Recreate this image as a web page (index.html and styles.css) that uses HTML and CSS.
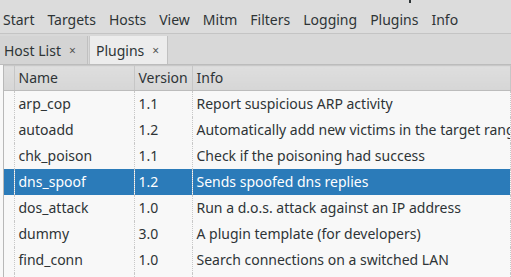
FILE: index.html
```html
<!DOCTYPE html>
<html lang="en">
<head>
  <meta charset="UTF-8" />
  <title>Ettercap – Plugins</title>
  <link rel="stylesheet" href="styles.css">
</head>
<body>

  <div class="titlebar-bit"></div>

  <nav class="menubar">
    <span>Start</span>
    <span>Targets</span>
    <span>Hosts</span>
    <span>View</span>
    <span>Mitm</span>
    <span>Filters</span>
    <span>Logging</span>
    <span>Plugins</span>
    <span>Info</span>
  </nav>

  <div class="tabbar">
    <div class="tab">Host List <span class="close">×</span></div>
    <div class="tab active">Plugins <span class="close">×</span></div>
  </div>

  <div class="view">
    <table class="plugins">
      <colgroup>
        <col class="col-mark">
        <col class="col-name">
        <col class="col-ver">
        <col>
      </colgroup>
      <thead>
        <tr>
          <th></th>
          <th>Name</th>
          <th>Version</th>
          <th>Info</th>
        </tr>
      </thead>
      <tbody>
        <tr><td></td><td>arp_cop</td><td>1.1</td><td>Report suspicious ARP activity</td></tr>
        <tr><td></td><td>autoadd</td><td>1.2</td><td>Automatically add new victims in the target range</td></tr>
        <tr><td></td><td>chk_poison</td><td>1.1</td><td>Check if the poisoning had success</td></tr>
        <tr class="selected"><td></td><td>dns_spoof</td><td>1.2</td><td>Sends spoofed dns replies</td></tr>
        <tr><td></td><td>dos_attack</td><td>1.0</td><td>Run a d.o.s. attack against an IP address</td></tr>
        <tr><td></td><td>dummy</td><td>3.0</td><td>A plugin template (for developers)</td></tr>
        <tr><td></td><td>find_conn</td><td>1.0</td><td>Search connections on a switched LAN</td></tr>
        <tr><td></td><td></td><td></td><td></td></tr>
      </tbody>
    </table>
  </div>

</body>
</html>
```

FILE: styles.css
```css
body {
  margin: 0;
  width: 511px;
  height: 277px;
  overflow: hidden;
  font-family: 'Noto Sans', sans-serif;
  font-size: 14px;
  color: #2e3436;
  background-color: #f8f8f8;
  position: relative;
}

.titlebar-bit {
  position: absolute;
  left: 409px;
  top: 0;
  width: 2px;
  height: 3px;
  background-color: #2e3436;
}

.menubar {
  display: flex;
  gap: 13px;
  height: 34px;
  padding: 0 0 0 3px;
  align-items: center;
  padding-top: 7px;
  box-sizing: border-box;
  background-color: #dcdcdc;
  border-bottom: 1px solid #c4c4c4;
  line-height: 20px;
}

.tabbar {
  display: flex;
  height: 31px;
  background-color: #d8d8d8;
  border-bottom: 1px solid #bcbcbc;
  box-sizing: border-box;
}

.tab {
  display: flex;
  align-items: center;
  gap: 8px;
  width: 88px;
  box-sizing: border-box;
  padding: 0 0 0 4px;
  background-color: #d4d4d4;
  border-right: 1px solid #c0c0c0;
  margin-top: 2px;
}

.tab.active {
  width: 79px;
  background-color: #ececec;
  border-left: 1px solid #c8c8c8;
  margin-left: 1px;
  padding-left: 6px;
}

.close {
  font-size: 12px;
  color: #555;
}

.view {
  border-left: 1px solid #b8b8b8;
  margin-left: 3px;
}

.plugins {
  border-collapse: collapse;
  table-layout: fixed;
  width: 100%;
  white-space: nowrap;
  line-height: 18px;
}

.col-mark {
  width: 10px;
}

.col-name {
  width: 120px;
}

.col-ver {
  width: 58px;
}

.plugins th {
  height: 24px;
  padding: 0 4px;
  text-align: left;
  font-weight: normal;
  background: linear-gradient(#dedede, #d6d6d6);
  border-top: 1px solid #c8c8c8;
  border-bottom: 1px solid #bcbcbc;
  border-right: 1px solid #c6c6c6;
}

.plugins td {
  height: 26px;
  padding: 0 4px;
  overflow: hidden;
  border-right: 1px dotted #c8c8c8;
}

.plugins tr.selected td {
  background-color: #2b7bb9;
  color: #ffffff;
}
```
